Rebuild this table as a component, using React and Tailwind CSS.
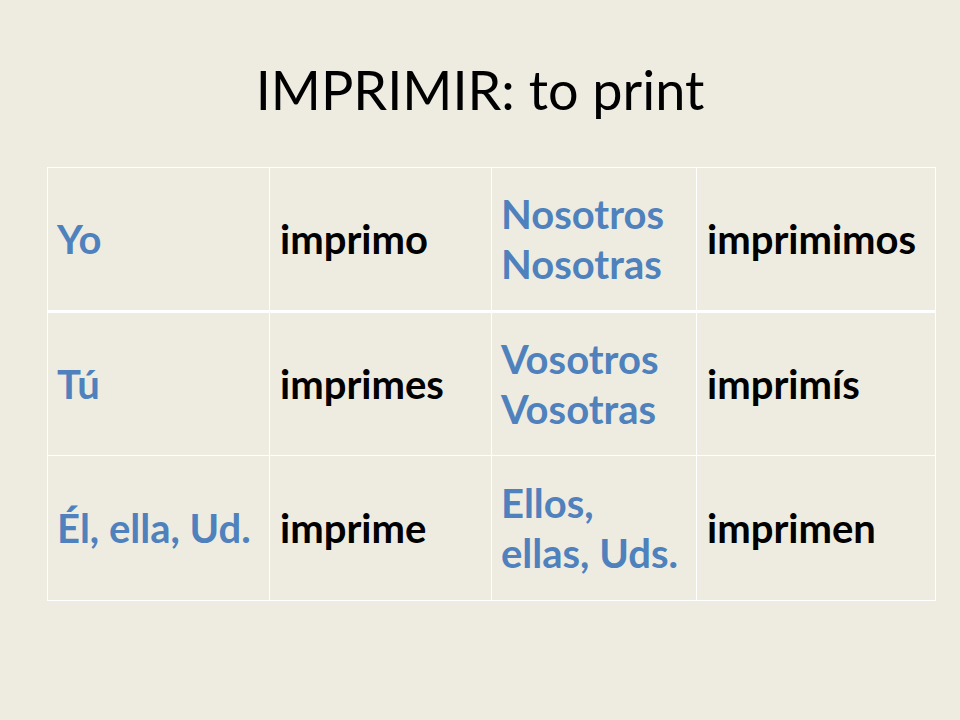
import React from "react";

const rows = [
  { p1: ["Yo"], v1: "imprimo", p2: ["Nosotros", "Nosotras"], v2: "imprimimos" },
  { p1: ["Tú"], v1: "imprimes", p2: ["Vosotros", "Vosotras"], v2: "imprimís" },
  { p1: ["Él, ella, Ud."], v1: "imprime", p2: ["Ellos,", "ellas, Uds."], v2: "imprimen" },
];

export default function App() {
  return (
    <div
      className="w-[960px] h-[720px] bg-[#EEECE1] overflow-hidden"
      style={{ fontFamily: "Lato, 'Open Sans', sans-serif" }}
    >
      <div className="h-[167px] flex justify-center pt-[57px]">
        <h1 className="text-[54px] leading-[66px] text-black font-normal">IMPRIMIR: to print</h1>
      </div>
      <div className="pl-[47px]">
        <table className="border-collapse">
          <tbody>
            {rows.map((r, i) => (
              <tr
                key={i}
                className={
                  i === 0
                    ? "h-[144px] border-b-[3px] border-white"
                    : i === 1
                    ? "h-[144px] border-b border-white"
                    : "h-[145px]"
                }
              >
                <td className="w-[222px] border border-white pl-[9px] align-middle text-[#4F81BD] font-bold text-[40px] leading-[50px]">
                  {r.p1.map((t, k) => (
                    <div key={k} className="whitespace-nowrap">{t}</div>
                  ))}
                </td>
                <td className="w-[222px] border border-white pl-[10px] align-middle text-black font-bold text-[40px] leading-[50px]">
                  {r.v1}
                </td>
                <td className="w-[205px] border border-white pl-[9px] align-middle text-[#4F81BD] font-bold text-[40px] leading-[50px]">
                  {r.p2.map((t, k) => (
                    <div key={k} className="whitespace-nowrap">{t}</div>
                  ))}
                </td>
                <td className="w-[239px] border border-white pl-[10px] align-middle text-black font-bold text-[40px] leading-[50px]">
                  {r.v2}
                </td>
              </tr>
            ))}
          </tbody>
        </table>
      </div>
    </div>
  );
}
